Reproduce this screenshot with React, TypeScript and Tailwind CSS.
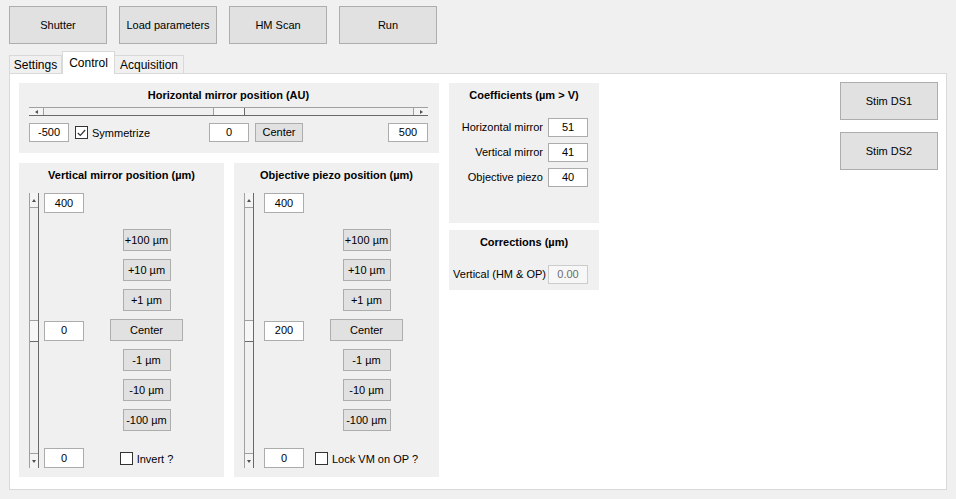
import React from 'react'

const btn = 'flex items-center justify-center border border-[#adadad] bg-[#e1e1e1] text-[11px] text-black'
const field = 'flex items-center justify-center border border-[#acacac] bg-white text-[11px] text-black'

function Arrow({ dir }: { dir: 'left' | 'right' | 'up' | 'down' }) {
  const shape = {
    left: 'border-y-[2px] border-y-transparent border-r-[3px] border-r-[#505050]',
    right: 'border-y-[2px] border-y-transparent border-l-[3px] border-l-[#505050]',
    up: 'border-x-[2px] border-x-transparent border-b-[3px] border-b-[#505050]',
    down: 'border-x-[2px] border-x-transparent border-t-[3px] border-t-[#505050]',
  }[dir]
  return <div className={`h-0 w-0 ${shape}`} />
}

function HSlider() {
  return (
    <div className="flex h-[9px] w-full border-t border-b border-t-[#a0a0a0] border-b-[#696969] bg-[#f0f0f0]">
      <div className="flex w-[15px] items-center justify-center border-r border-[#a0a0a0] bg-[#f4f4f4]">
        <Arrow dir="left" />
      </div>
      <div className="flex-1" />
      <div className="w-[32px] border-x border-l-[#a0a0a0] border-r-[#696969] bg-[#f7f7f7]" />
      <div className="flex-1" />
      <div className="flex w-[15px] items-center justify-center border-l border-[#a0a0a0] bg-[#f4f4f4]">
        <Arrow dir="right" />
      </div>
    </div>
  )
}

function VSlider() {
  return (
    <div className="flex h-[275px] w-[10px] flex-col border-x border-l-[#a0a0a0] border-r-[#696969] bg-[#f0f0f0]">
      <div className="flex h-[15px] items-center justify-center border-b border-[#a0a0a0] bg-[#f4f4f4]">
        <Arrow dir="up" />
      </div>
      <div className="flex-1" />
      <div className="h-[22px] border-y border-t-[#a0a0a0] border-b-[#696969] bg-[#f7f7f7]" />
      <div className="flex-1" />
      <div className="flex h-[15px] items-center justify-center border-t border-[#a0a0a0] bg-[#f4f4f4]">
        <Arrow dir="down" />
      </div>
    </div>
  )
}

function Check({ checked, label }: { checked?: boolean; label: string }) {
  return (
    <div className="flex items-center gap-[4px] whitespace-nowrap text-[11px]">
      <div className="flex h-[13px] w-[13px] items-center justify-center border border-[#333] bg-white">
        {checked && (
          <svg width="9" height="8" viewBox="0 0 9 8">
            <path d="M0.8 4 L3.3 6.5 L8.2 1" stroke="#333" strokeWidth="1.2" fill="none" />
          </svg>
        )}
      </div>
      <span className="pt-[2px]">{label}</span>
    </div>
  )
}

function PositionPanel({ title, mid, check, wide }: { title: string; mid: string; check: string; wide?: boolean }) {
  const steps = ['+100 µm', '+10 µm', '+1 µm', 'Center', '-1 µm', '-10 µm', '-100 µm']
  return (
    <div className="flex h-[314px] w-[205px] flex-col bg-[#f0f0f0] pt-[5px]">
      <div className="text-center text-[11px] font-bold leading-[14px]">{title}</div>
      <div className="ml-[10px] mt-[11px] flex h-[275px]">
        <VSlider />
        <div className={`${wide ? 'ml-[10px]' : 'ml-[5px]'} flex w-[40px] flex-col justify-between`}>
          <div className={`${field} h-[20px]`}>400</div>
          <div className={`${field} h-[20px]`}>{mid}</div>
          <div className={`${field} h-[20px]`}>0</div>
        </div>
        <div className="ml-[26px] flex w-[73px] flex-col items-center gap-[8px] pt-[36px]">
          {steps.map((s) => (
            <div key={s} className={`${btn} h-[22px] ${s === 'Center' ? 'w-[73px]' : 'w-[48px]'}`}>
              {s}
            </div>
          ))}
          <div className="mt-auto flex h-[20px] items-center">
            <Check label={check} />
          </div>
        </div>
      </div>
    </div>
  )
}

export default function App() {
  return (
    <div className="flex h-[499px] w-[956px] flex-col bg-[#f0f0f0] pl-[9px] pt-[6px] font-['Liberation_Sans',Arial,sans-serif] text-black">
      <div className="flex gap-[12px]">
        {['Shutter', 'Load parameters', 'HM Scan', 'Run'].map((b) => (
          <div key={b} className={`${btn} h-[38px] w-[98px]`}>
            {b}
          </div>
        ))}
      </div>

      <div className="mt-[8px] flex h-[21px] items-end text-[12px]">
        <div className="flex h-[18px] w-[53px] items-center justify-center border border-b-0 border-[#d9d9d9]">Settings</div>
        <div className="relative z-10 -mb-px flex h-[23px] w-[53px] items-start justify-center border border-b-0 border-[#d9d9d9] bg-white pt-[2px]">
          Control
        </div>
        <div className="flex h-[18px] w-[69px] items-center justify-center border border-b-0 border-l-0 border-[#d9d9d9]">Acquisition</div>
      </div>

      <div className="flex h-[417px] w-[938px] gap-[10px] border border-[#d9d9d9] bg-white p-[9px]">
        <div className="flex w-[420px] flex-col gap-[10px]">
          <div className="flex h-[70px] flex-col bg-[#f0f0f0] pl-[10px] pr-[11px] pt-[5px]">
            <div className="text-center text-[11px] font-bold leading-[14px]">Horizontal mirror position (AU)</div>
            <div className="mt-[5px]">
              <HSlider />
            </div>
            <div className="mt-[7px] flex h-[19px] items-center">
              <div className="flex w-[180px] items-center">
                <div className={`${field} h-[19px] w-[40px]`}>-500</div>
                <div className="ml-[6px]">
                  <Check checked label="Symmetrize" />
                </div>
              </div>
              <div className={`${field} h-[19px] w-[40px]`}>0</div>
              <div className={`${btn} ml-[6px] h-[19px] w-[48px]`}>Center</div>
              <div className={`${field} ml-auto h-[19px] w-[40px]`}>500</div>
            </div>
          </div>
          <div className="flex gap-[10px]">
            <PositionPanel title="Vertical mirror position (µm)" mid="0" check="Invert ?" />
            <PositionPanel title="Objective piezo position (µm)" mid="200" check="Lock VM on OP ?" wide />
          </div>
        </div>

        <div className="flex w-[150px] flex-col gap-[7px]">
          <div className="flex h-[140px] flex-col bg-[#f0f0f0] pt-[5px]">
            <div className="text-center text-[11px] font-bold leading-[14px]">Coefficients (µm &gt; V)</div>
            <div className="mt-[16px] flex flex-col gap-[6px] pr-[11px]">
              {[
                ['Horizontal mirror', '51'],
                ['Vertical mirror', '41'],
                ['Objective piezo', '40'],
              ].map(([l, v]) => (
                <div key={l} className="flex items-center justify-end gap-[5px] text-[11px]">
                  <span>{l}</span>
                  <div className={`${field} h-[19px] w-[40px]`}>{v}</div>
                </div>
              ))}
            </div>
          </div>
          <div className="flex h-[60px] flex-col bg-[#f0f0f0] pt-[5px]">
            <div className="text-center text-[11px] font-bold leading-[14px]">Corrections (µm)</div>
            <div className="mt-[16px] flex items-center justify-end gap-[2px] pr-[11px] text-[11px]">
              <span>Vertical (HM &amp; OP)</span>
              <div className="flex h-[19px] w-[40px] items-center justify-center border border-[#cccccc] bg-[#f7f7f7] text-[#6d6d6d]">
                0.00
              </div>
            </div>
          </div>
        </div>

        <div className="-mr-[1px] -mt-[1px] ml-auto flex flex-col gap-[12px]">
          <div className={`${btn} h-[38px] w-[98px]`}>Stim DS1</div>
          <div className={`${btn} h-[38px] w-[98px]`}>Stim DS2</div>
        </div>
      </div>
    </div>
  )
}
